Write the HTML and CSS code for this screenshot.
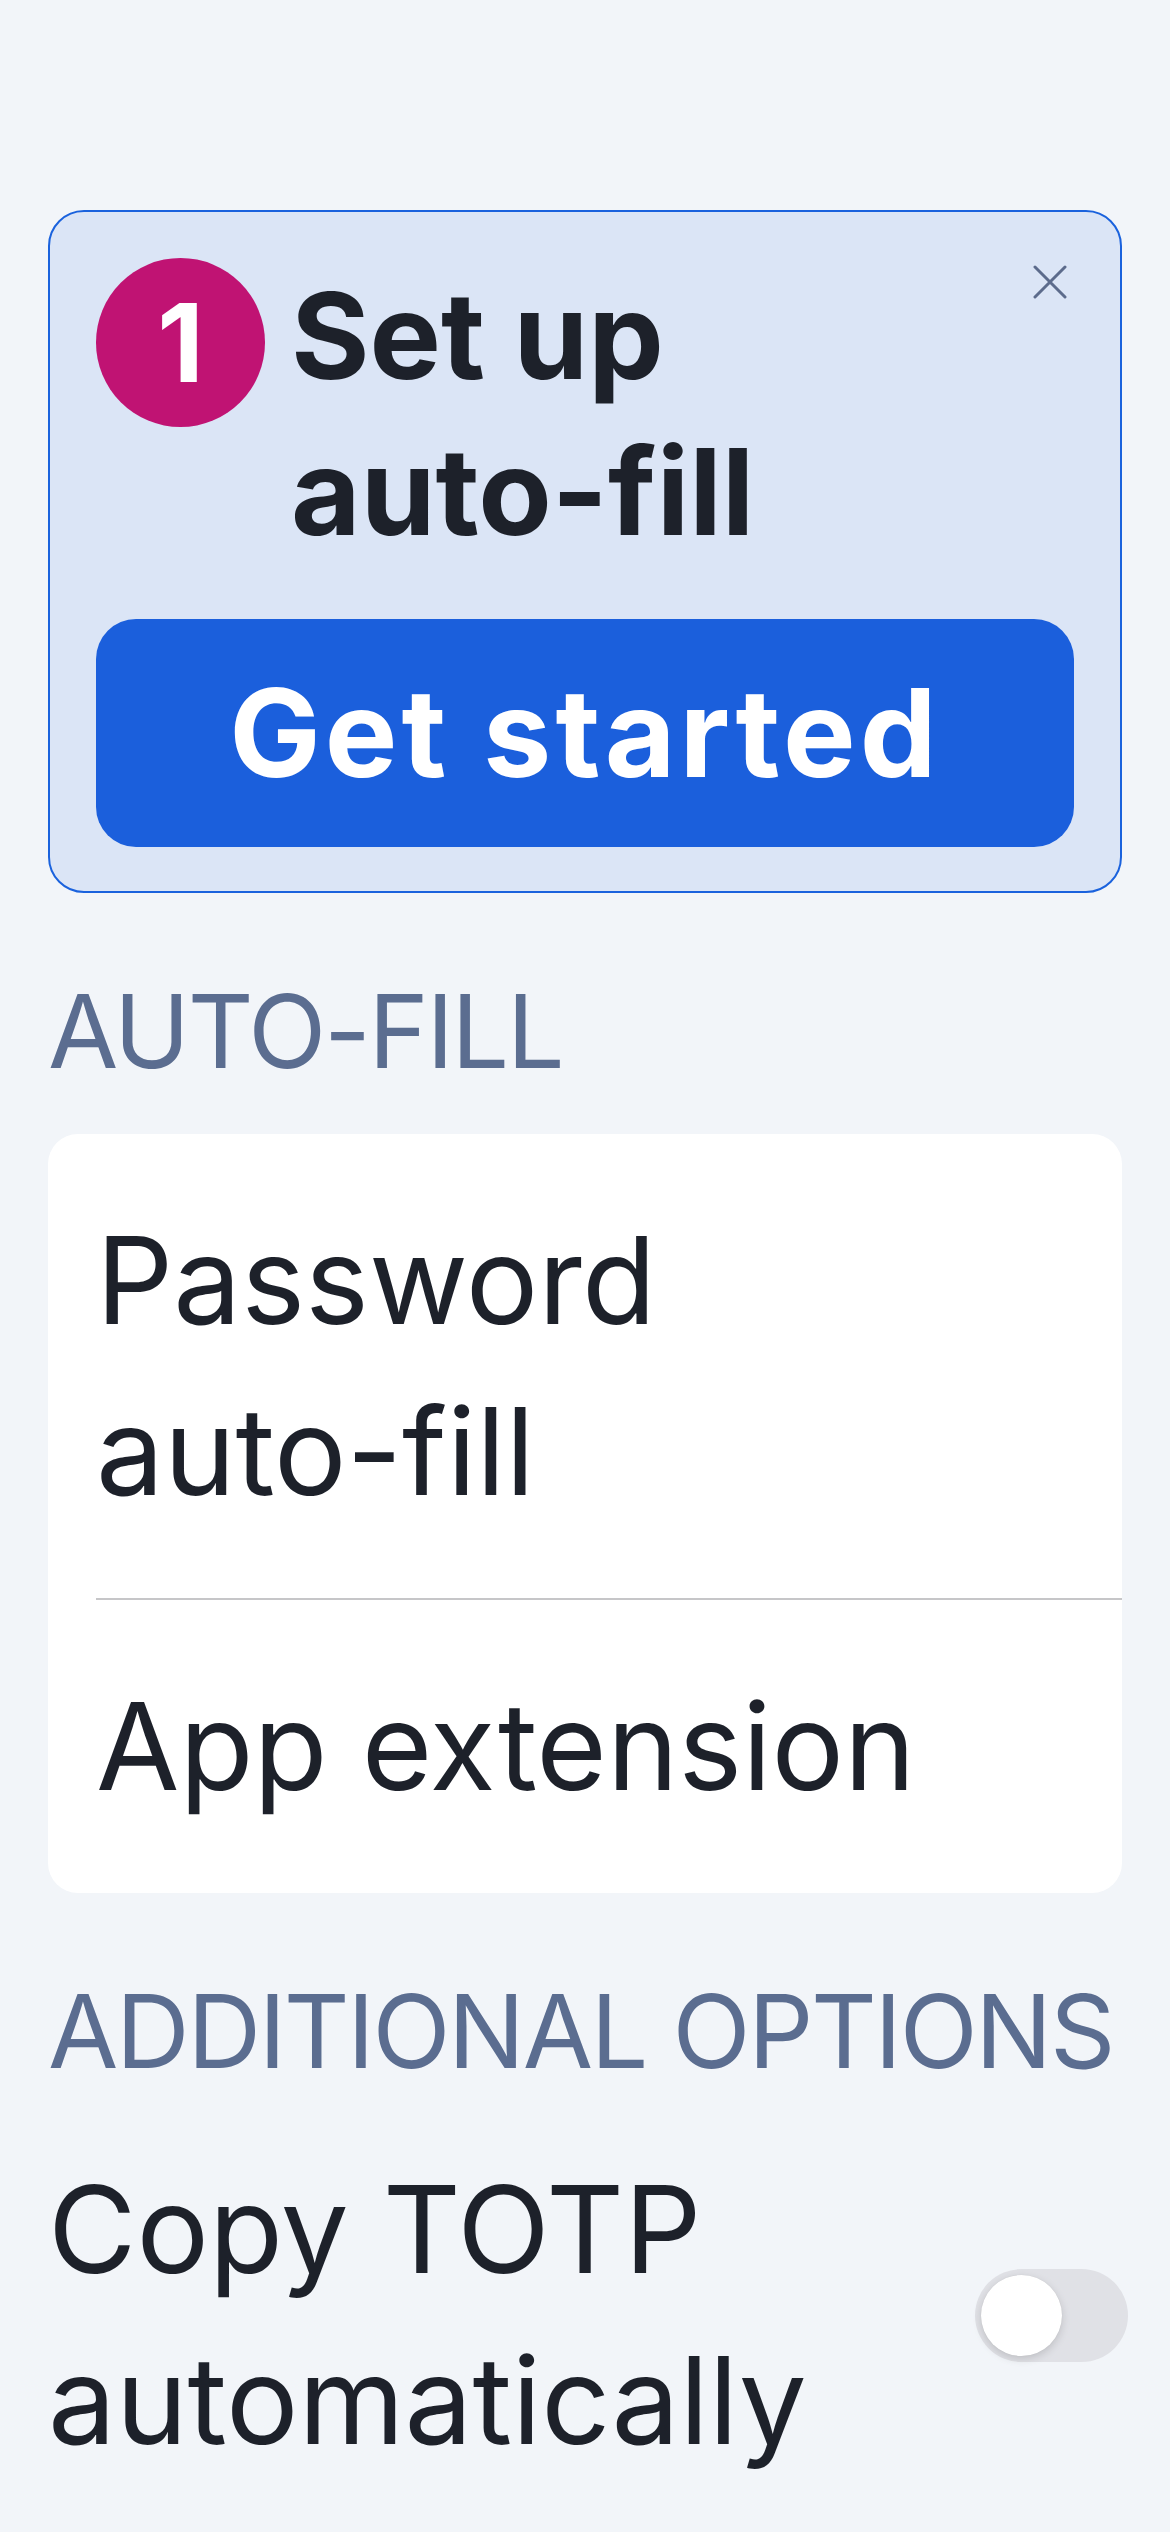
FILE: index.html
```html
<!DOCTYPE html>
<html lang="en">
<head>
<meta charset="utf-8">
<title>Auto-fill settings</title>
<link rel="stylesheet" href="styles.css">
</head>
<body>
<main class="page">
  <section class="setup-card">
    <div class="setup-head">
      <div class="step-badge">1</div>
      <h1 class="setup-title">Set up <span class="nowrap">auto-fill</span></h1>
      <button class="close-btn" aria-label="Close">
        <svg viewBox="0 0 34 34" width="34" height="34"><path d="M2 2 L32 32 M32 2 L2 32" stroke="#5c6b8c" stroke-width="3" stroke-linecap="round" fill="none"/></svg>
      </button>
    </div>
    <button class="primary-btn">Get started</button>
  </section>

  <h2 class="section-label">AUTO-FILL</h2>
  <div class="list-card">
    <div class="list-row">Password <span class="nowrap">auto-fill</span></div>
    <div class="list-row">App extension</div>
  </div>

  <h2 class="section-label">ADDITIONAL OPTIONS</h2>
  <div class="toggle-row">
    <span class="toggle-text">Copy TOTP automatically</span>
    <span class="switch"><span class="knob"></span></span>
  </div>
</main>
</body>
</html>
```

FILE: styles.css
```css
* { box-sizing: border-box; }
html, body {
  margin: 0;
  padding: 0;
  background: #f2f5f9;
}
body {
  font-family: Inter, "Noto Sans", "Liberation Sans", sans-serif;
  color: #1d212a;
}
.nowrap { white-space: nowrap; }
.page {
  padding: 210px 48px 0 48px;
}
.setup-card {
  background: #dbe5f6;
  border: 2px solid #1a62dd;
  border-radius: 36px;
  padding: 46px 46px 44px 46px;
  display: flex;
  flex-direction: column;
  gap: 49px;
}
.setup-head {
  display: flex;
  align-items: flex-start;
}
.step-badge {
  flex: 0 0 auto;
  width: 169px;
  height: 169px;
  border-radius: 50%;
  background: #c01373;
  color: #fff;
  font-weight: 700;
  font-size: 108px;
  line-height: 169px;
  text-align: center;
}
.setup-title {
  flex: 1 1 auto;
  margin: 0 0 0 26px;
  font-size: 120px;
  font-weight: 700;
  line-height: 156px;
  color: #1d212a;
}
.close-btn {
  flex: 0 0 auto;
  background: none;
  border: 0;
  padding: 0;
  margin: 7px 7px 0 0;
  width: 34px;
  height: 34px;
  display: block;
}
.close-btn svg { display: block; }
.primary-btn {
  display: block;
  width: 100%;
  height: 228px;
  border: 0;
  border-radius: 40px;
  background: #1b5fdc;
  color: #fff;
  font-family: inherit;
  font-weight: 700;
  font-size: 122px;
  letter-spacing: 4px;
  line-height: 1;
}
.section-label {
  margin: 77px 0 42px 0;
  font-size: 102px;
  font-weight: 400;
  letter-spacing: -2.3px;
  line-height: 122px;
  white-space: nowrap;
  color: #5b6d90;
}
.list-card {
  background: #fff;
  border-radius: 30px;
  padding-left: 48px;
}
.list-row {
  padding: 61px 0;
  font-size: 121px;
  line-height: 171px;
}
.list-row + .list-row {
  border-top: 2px solid #c6c6c8;
}
.list-row:first-child { padding-right: 300px; }
.toggle-row {
  margin-top: 52px;
  display: flex;
  align-items: center;
  justify-content: space-between;
}
.toggle-text {
  width: 800px;
  font-size: 121px;
  line-height: 171px;
}
.switch {
  position: relative;
  flex: 0 0 auto;
  width: 153px;
  height: 93px;
  margin-right: -6px;
  border-radius: 47px;
  background: #e0e1e6;
}
.knob {
  position: absolute;
  left: 6px;
  top: 6px;
  width: 81px;
  height: 81px;
  border-radius: 50%;
  background: #fff;
  box-shadow: 0 3px 8px rgba(0,0,0,0.15), 0 0 1px rgba(0,0,0,0.1);
}
```
